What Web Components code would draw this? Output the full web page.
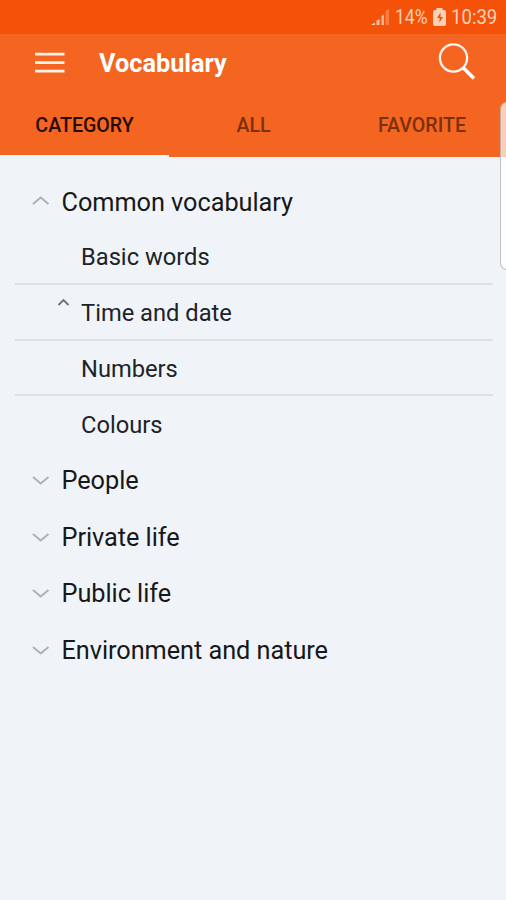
<!DOCTYPE html>
<html lang="en">
<head>
<meta charset="utf-8">
<title>Vocabulary</title>
<style>
html, body { margin: 0; height: 100%; }
body { font-family: Roboto, "Liberation Sans", sans-serif; background: #f0f4f9; overflow: hidden; }
</style>
</head>
<body>
<vocab-screen>
  <status-bar slot="top"></status-bar>
  <app-bar slot="top">Vocabulary</app-bar>
  <tab-bar slot="top">
    <tab-item active>CATEGORY</tab-item>
    <tab-item>ALL</tab-item>
    <tab-item>FAVORITE</tab-item>
  </tab-bar>
  <word-group open label="Common vocabulary">
    <word-row>Basic words</word-row>
    <word-row marked>Time and date</word-row>
    <word-row>Numbers</word-row>
    <word-row>Colours</word-row>
  </word-group>
  <word-group label="People"></word-group>
  <word-group label="Private life"></word-group>
  <word-group label="Public life"></word-group>
  <word-group label="Environment and nature"></word-group>
</vocab-screen>
<script>
const define = (name, html, setup) => customElements.define(name, class extends HTMLElement {
  constructor() {
    super();
    this.attachShadow({ mode: "open" }).innerHTML = html;
  }
  connectedCallback() { if (setup) setup(this, this.shadowRoot); }
});

define("vocab-screen", `
<style>
:host { display: flex; flex-direction: column; position: relative; height: 900px; width: 506px; overflow: hidden; background: #f0f4f9; }
main { padding-top: 16px; }
.edge { position: absolute; left: 500px; top: 102px; width: 20px; height: 166px; border: 1px solid rgba(160,160,155,.65); border-top-color: rgba(230,150,110,.6); border-radius: 7px; background: linear-gradient(rgba(255,255,255,.68) 55px, #fcfdfe 55px); }
</style>
<slot name="top"></slot><main><slot></slot></main><div class="edge"></div>`);

define("status-bar", `
<style>
:host { display: flex; align-items: center; justify-content: flex-end; height: 34px; box-sizing: border-box; padding-right: 9px; background: #f45208; color: #ffd0b8; font-size: 20px; line-height: 36px; }
svg { display: block; flex: none; }
.pct { margin-left: 5px; width: 34px; white-space: nowrap; }
.time { margin-left: 5px; width: 46px; white-space: nowrap; }
span { display: block; }
i { font-style: normal; display: inline-block; transform-origin: 0 50%; }
.pct i { transform: scaleX(.875); } .time i { transform: scaleX(.93); }
</style>
<svg width="19" height="18" viewBox="0 0 19 18"><g fill="#ffd0b8"><path d="M0 17l4-2.500V17z"/><path d="M5.500 12.500l3-1.500v6h-3z" opacity=".9"/><path d="M10.500 8l2.500-1.500V17h-2.500z" opacity=".8"/><path d="M14.500 3L18 1v16h-3.500z" opacity=".35"/></g></svg>
<span class="pct"><i>14%</i></span>
<svg width="13" height="18" viewBox="0 0 13 18" style="margin-left:4px"><path fill="#ffd0b8" d="M3.500 0h6v2H11q2 0 2 2v12q0 2-2 2H2q-2 0-2-2V4q0-2 2-2h1.500z"/><path d="M7.500 4.500L4 10h2.500v4.500L10 9H7.500z" fill="#f45208"/></svg>
<span class="time"><i>10:39</i></span>`);

define("app-bar", `
<style>
:host { display: flex; align-items: center; height: 57px; background: #f46522; color: #fff; font-size: 25.300px; font-weight: 700; box-sizing: border-box; padding: 0 30px 0 35px; }
svg { display: block; flex: none; }
h1 { margin: 2px auto 0 34px; font: inherit; line-height: 30px; letter-spacing: 0; }
</style>
<svg width="30" height="22" viewBox="0 0 30 22"><path d="M0 2.100h29.500M0 10.600h29.500M0 19.100h29.500" stroke="#fff0e8" stroke-width="2.800"/></svg>
<h1><slot></slot></h1>
<svg width="38" height="40" viewBox="0 0 38 40"><circle cx="15.500" cy="15" r="13.600" fill="none" stroke="#fff2ec" stroke-width="2.300"/><path d="M25 24.500l2 2" stroke="#fff2ec" stroke-width="2.500"/><path d="M25.500 25L36 35.500" stroke="#fff" stroke-width="3.600"/></svg>`);

define("tab-bar", `
<style>:host { display: grid; grid-template-columns: 169px 169px 168px; height: 66px; background: #f46522; }</style><slot></slot>`);

define("tab-item", `
<style>
:host { display: flex; justify-content: center; position: relative; height: 66px; line-height: 20px; box-sizing: border-box; padding-top: 25px; font-size: 19.600px; font-weight: 500; color: #7b3009; }
:host([active]) { color: #230b00; }
:host([active])::after { content: ""; position: absolute; left: 0; right: 0; bottom: 0; height: 2px; background: #e6f6fc; }
</style><slot></slot>`);

define("word-group", `
<style>
:host { display: block; color: #16181a; }
header { display: flex; align-items: center; height: 56.700px; padding-left: 32px; font-size: 25.300px; letter-spacing: -.05px; }
:host([open]) header { height: 56px; }
:host([open]) span { padding-top: 2px; }
svg { margin: 1px 11.500px 0 0; flex: none; }
:host([open]) svg { transform: translateY(-2px) scaleY(-1); }
</style>
<header><svg width="18" height="12" viewBox="0 0 18 12"><path d="M1 2l7.700 6.500L16.500 2" fill="none" stroke="#adb1b4" stroke-width="2"/></svg><span></span></header>
<slot></slot>`, (el, root) => { root.querySelector("span").textContent = el.getAttribute("label"); });

define("word-row", `
<style>
:host { display: flex; height: 55.750px; box-sizing: border-box; align-items: center; margin: 0 13px 0 15px; padding-top: 3px; border-bottom: 2px solid #dde1e4; font-size: 23.700px; color: #202326; }
:host(:last-child) { border-bottom-color: transparent; }
.mark { width: 66px; height: 34px; flex: none; box-sizing: border-box; padding: 1px 0 0 42px; }
svg { display: none; }
:host([marked]) svg { display: block; }
</style>
<div class="mark"><svg width="13" height="10" viewBox="0 0 13 10"><path d="M1.500 8l5-5 5 5" fill="none" stroke="#6c7073" stroke-width="1.800"/></svg></div><slot></slot>`);
</script>
</body>
</html>
